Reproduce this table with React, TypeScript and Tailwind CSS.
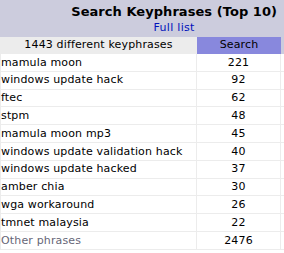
import React from "react";

const rows: [string, string][] = [
  ["mamula moon", "221"],
  ["windows update hack", "92"],
  ["ftec", "62"],
  ["stpm", "48"],
  ["mamula moon mp3", "45"],
  ["windows update validation hack", "40"],
  ["windows update hacked", "37"],
  ["amber chia", "30"],
  ["wga workaround", "26"],
  ["tmnet malaysia", "22"],
];

export default function App() {
  return (
    <div
      className="w-[284px] h-[253px] bg-white overflow-hidden text-black"
      style={{ fontFamily: '"DejaVu Sans", Verdana, sans-serif' }}
    >
      <div className="h-[37px] bg-[#CCCCDD] flex justify-end pr-[7px]">
        <div className="flex flex-col items-center">
          <div className="text-[13px] font-bold leading-[16px] mt-[4px] tracking-[0.05px] text-[#000]">
            Search Keyphrases (Top 10)
          </div>
          <div className="text-[11px] leading-[14px] mt-[1px] text-[#0011BB] tracking-[0.3px]">
            Full list
          </div>
        </div>
      </div>
      <div className="flex h-[17px] text-[11px] tracking-[0.15px]">
        <div className="w-[197px] bg-[#ECECEC] flex items-center justify-center">
          1443 different keyphrases
        </div>
        <div className="w-[84px] bg-[#8888DD] flex items-center justify-center">
          Search
        </div>
        <div className="flex-1 bg-[#CCCCDD]" />
      </div>
      {rows.map(([k, v]) => (
        <div
          key={k}
          className="flex h-[17.8px] text-[11px] tracking-[0.15px] border-b border-[#ECECEC]"
        >
          <div className="w-[197px] border-l border-r border-[#ECECEC] flex items-center pt-[1px]">
            {k}
          </div>
          <div className="w-[84px] border-r border-[#ECECEC] flex items-center justify-center pt-[1px]">
            {v}
          </div>
          <div className="flex-1" />
        </div>
      ))}
      <div className="flex h-[17.8px] text-[11px] tracking-[0.15px] border-b border-[#ECECEC]">
        <div className="w-[197px] border-l border-r border-[#ECECEC] flex items-center pt-[1px] text-[#666677]">
          Other phrases
        </div>
        <div className="w-[84px] border-r border-[#ECECEC] flex items-center justify-center pt-[1px]">
          2476
        </div>
        <div className="flex-1" />
      </div>
    </div>
  );
}
